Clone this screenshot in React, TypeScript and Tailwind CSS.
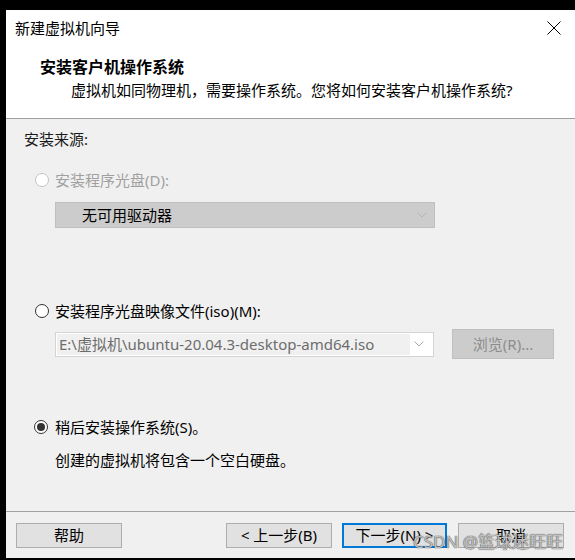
import React from "react";

const FONT = "font-['Noto_Sans','Noto_Sans_CJK_SC',sans-serif]";

function Chevron({ color }: { color: string }) {
  return (
    <svg width="10" height="6" viewBox="0 0 10 6" className="block">
      <path d="M0.5 0.5 L5 5 L9.5 0.5" fill="none" stroke={color} strokeWidth="1" />
    </svg>
  );
}

function Radio({ checked, disabled }: { checked?: boolean; disabled?: boolean }) {
  return (
    <div
      className={`w-[14px] h-[14px] rounded-full bg-white border flex items-center justify-center shrink-0 ${
        disabled ? "border-[#c4c4c4]" : "border-[#333333]"
      }`}
    >
      {checked && <div className="w-[8px] h-[8px] rounded-full bg-[#333333]" />}
    </div>
  );
}

function Btn({
  children,
  primary,
  className = "",
}: {
  children: React.ReactNode;
  primary?: boolean;
  className?: string;
}) {
  return (
    <div
      className={`h-[25px] flex items-center justify-center bg-[#e1e1e1] text-[15px] text-black ${
        primary ? "border-2 border-[#0078d7]" : "border border-[#adadad]"
      } ${className}`}
    >
      {children}
    </div>
  );
}

export default function App() {
  return (
    <div className={`w-[575px] h-[560px] bg-black overflow-hidden relative ${FONT}`}>
      <div className="ml-[6px] mt-[10px] w-[569px] h-[548px] flex flex-col bg-[#f0f0f0]">
        {/* Title bar + header */}
        <div className="bg-white h-[108px] flex flex-col">
          <div className="h-[36px] flex items-center justify-between pl-[9px] pr-[14px]">
            <span className="text-[15px] leading-none text-black">新建虚拟机向导</span>
            <svg width="14" height="14" viewBox="0 0 14 14" className="block">
              <path d="M0.5 0.5 L13.5 13.5 M13.5 0.5 L0.5 13.5" stroke="#000" strokeWidth="1" />
            </svg>
          </div>
          <div className="h-[21px] mt-[10px] flex items-center pl-[34px]">
            <span className="text-[16px] font-bold leading-none text-black">安装客户机操作系统</span>
          </div>
          <div className="h-[22px] mt-[2px] flex items-center pl-[65px]">
            <span className="text-[15px] leading-none text-black">
              虚拟机如同物理机，需要操作系统。您将如何安装客户机操作系统?
            </span>
          </div>
        </div>
        <div className="h-px bg-[#a0a0a0]" />

        {/* Body */}
        <div className="h-[392px] flex flex-col">
          <div className="h-[40px] flex items-center pl-[18px]">
            <span className="text-[15px] leading-none text-[#1a1a1a]">安装来源:</span>
          </div>

          <div className="h-[22px] mt-[10px] flex items-center pl-[29px] gap-[6px]">
            <Radio disabled />
            <span className="text-[15px] leading-none text-[#a0a0a0]">安装程序光盘(D):</span>
          </div>

          <div className="ml-[49px] mt-[11px] w-[380px] h-[26px] bg-[#cccccc] border border-[#bfbfbf] flex items-center justify-between pl-[26px] pr-[7px]">
            <span className="text-[15px] leading-none text-black">无可用驱动器</span>
            <Chevron color="#b5b5b5" />
          </div>

          <div className="h-[22px] mt-[72px] flex items-center pl-[29px] gap-[6px]">
            <Radio />
            <span className="text-[15px] leading-none text-black">安装程序光盘映像文件(iso)(M):</span>
          </div>

          <div className="h-[30px] mt-[7px] flex items-center pl-[49px]">
            <div className="w-[379px] h-[25px] bg-white border border-[#d4d4d4] flex items-center pl-[1px] pr-[5px]">
              <div className="w-[353px] h-[21px] bg-[#f0f0f0] flex items-center pl-[2px]">
                <span className="text-[15px] leading-none text-[#6d6d6d] whitespace-nowrap">
                  E:\虚拟机\ubuntu-20.04.3-desktop-amd64.iso
                </span>
              </div>
              <div className="flex-1 flex justify-center">
                <Chevron color="#a8a8a8" />
              </div>
            </div>
            <div className="ml-[18px] w-[102px] h-[30px] bg-[#cccccc] border border-[#bfbfbf] flex items-center justify-center">
              <span className="text-[15px] leading-none text-[#8c8c8c]">浏览(R)...</span>
            </div>
          </div>

          <div className="h-[22px] mt-[57px] flex items-center pl-[28px] gap-[7px]">
            <Radio checked />
            <span className="text-[15px] leading-none text-black">稍后安装操作系统(S)。</span>
          </div>

          <div className="h-[22px] mt-[11px] flex items-center pl-[49px]">
            <span className="text-[15px] leading-none text-black">创建的虚拟机将包含一个空白硬盘。</span>
          </div>
        </div>
        <div className="h-px bg-[#a0a0a0]" />

        {/* Footer */}
        <div className="flex-1 flex pt-[11px] pl-[10px]">
          <Btn className="w-[106px]">帮助</Btn>
          <Btn className="w-[106px] ml-[104px]">&lt; 上一步(B)</Btn>
          <Btn primary className="w-[105px] ml-[10px]">下一步(N) &gt;</Btn>
          <Btn className="w-[106px] ml-[11px]">取消</Btn>
        </div>
      </div>

      {/* Watermark */}
      <div className="absolute left-[413px] top-[531px] text-[17px] leading-[22px] text-[#d6d6d6]/85 whitespace-nowrap pointer-events-none [text-shadow:0_0_1px_rgba(70,70,70,0.9),0_0_1px_rgba(70,70,70,0.9)]">
        CSDN @篮球迷旺旺
      </div>
    </div>
  );
}
